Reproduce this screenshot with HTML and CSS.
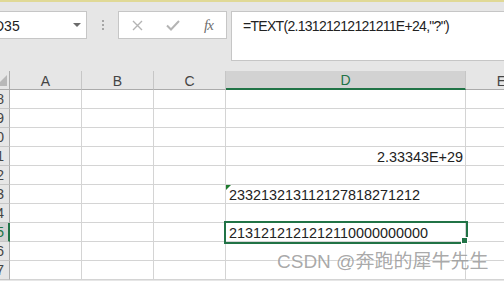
FILE: index.html
```html
<!DOCTYPE html>
<html lang="zh-CN">

<head>
  <meta charset="UTF-8">
  <meta name="viewport" content="width=device-width, initial-scale=1.0">
  <title>TEXT - Excel</title>
  <link rel="stylesheet" href="styles.css">
</head>

<body>

  <div class="topline"></div>

  <!-- Formula bar -->
  <div class="formula-row">
    <div class="namebox">
      <span class="name">D35</span>
      <span class="arrow"></span>
    </div>
    <div class="grip"><i></i><i></i><i></i></div>
    <div class="fbtns">
      <svg class="ico" width="11" height="11" viewBox="0 0 11 11">
        <path d="M1 1 L10 10 M10 1 L1 10" stroke="#b4b4b4" stroke-width="1.4" fill="none" />
      </svg>
      <svg class="ico" width="14" height="11" viewBox="0 0 14 11">
        <path d="M1 5.5 L5 9.5 L13 1" stroke="#b4b4b4" stroke-width="2" fill="none" />
      </svg>
      <span class="fx">fx</span>
    </div>
    <div class="fbar">=TEXT(2.13121212121211E+24,"?")</div>
  </div>

  <!-- Sheet -->
  <div class="sheet">
    <div class="c h corner"><span class="tri"></span></div>
    <div class="c h">A</div>
    <div class="c h">B</div>
    <div class="c h">C</div>
    <div class="c h h-sel">D</div>
    <div class="c h">E</div>

    <div class="c rh">28</div><div class="c"></div><div class="c"></div><div class="c"></div><div class="c d"></div><div class="c"></div>
    <div class="c rh">29</div><div class="c"></div><div class="c"></div><div class="c"></div><div class="c d"></div><div class="c"></div>
    <div class="c rh">30</div><div class="c"></div><div class="c"></div><div class="c"></div><div class="c d"></div><div class="c"></div>
    <div class="c rh">31</div><div class="c"></div><div class="c"></div><div class="c"></div><div class="c d num">2.33343E+29</div><div class="c"></div>
    <div class="c rh">32</div><div class="c"></div><div class="c"></div><div class="c"></div><div class="c d"></div><div class="c"></div>
    <div class="c rh">33</div><div class="c"></div><div class="c"></div><div class="c"></div><div class="c d txt warn">233213213112127818271212</div><div class="c"></div>
    <div class="c rh">34</div><div class="c"></div><div class="c"></div><div class="c"></div><div class="c d"></div><div class="c"></div>
    <div class="c rh rh-sel">35</div><div class="c"></div><div class="c"></div><div class="c"></div><div class="c d txt active">2131212121212110000000000</div><div class="c"></div>
    <div class="c rh">36</div><div class="c"></div><div class="c"></div><div class="c"></div><div class="c d"></div><div class="c"></div>
    <div class="c rh">37</div><div class="c"></div><div class="c"></div><div class="c"></div><div class="c d"></div><div class="c"></div>
  </div>

  <div class="watermark">CSDN @奔跑的犀牛先生</div>

</body>

</html>
```

FILE: styles.css
```css
body {
  font-family: "Liberation Sans", Arial, sans-serif;
  background: #e6e6e6;
  color: #222;
  margin: 0;
  padding: 0;
  width: 504px;
  height: 281px;
  overflow: hidden;
  position: relative;
}

.topline {
  height: 2px;
  background: #e0d996;
}

/* Formula row */
.formula-row {
  display: flex;
  align-items: flex-start;
  margin-top: 9px;
}

.namebox {
  width: 87px;
  height: 28px;
  box-sizing: border-box;
  background: #fff;
  border: 1px solid #c6c6c6;
  border-left: none;
  display: flex;
  align-items: center;
  justify-content: space-between;
  padding-right: 5px;
  overflow: hidden;
}

.name {
  font-size: 14px;
  margin-left: -6px;
  margin-top: 1px;
}

.arrow {
  width: 0;
  height: 0;
  border-left: 4px solid transparent;
  border-right: 4px solid transparent;
  border-top: 4px solid #6b6b6b;
}

.grip {
  width: 31px;
  height: 28px;
  display: flex;
  flex-direction: column;
  align-items: center;
  justify-content: center;
  gap: 2px;
}

.grip i {
  width: 2px;
  height: 2px;
  background: #a6a6a6;
}

.fbtns {
  width: 109px;
  height: 28px;
  box-sizing: border-box;
  background: #fff;
  border: 1px solid #c6c6c6;
  display: flex;
  align-items: center;
  padding-left: 13px;
  gap: 23px;
}

.fx {
  font-family: "Liberation Serif", "Times New Roman", serif;
  font-style: italic;
  font-size: 15px;
  color: #6f6f6f;
  letter-spacing: -1px;
  margin-left: 1px;
}

.fbar {
  flex: 1;
  height: 50px;
  margin-left: 4px;
  box-sizing: border-box;
  background: #fff;
  border: 1px solid #c6c6c6;
  border-right: none;
  padding: 4px 0 0 11px;
  font-size: 14px;
  line-height: 20px;
  letter-spacing: -0.7px;
  white-space: nowrap;
}

/* Sheet grid */
.sheet {
  margin-top: 10px;
  width: 538px;
  display: grid;
  grid-template-columns: 10px 72px 72px 72px 240px 72px;
  grid-auto-rows: 19px;
  background: #fff;
}

.c {
  box-sizing: border-box;
  border-right: 1px solid #d4d4d4;
  border-bottom: 1px solid #d4d4d4;
  display: flex;
  align-items: flex-end;
  font-size: 14.4px;
  line-height: 16px;
  white-space: nowrap;
  position: relative;
}

.h {
  background: #e6e6e6;
  border-right-color: #c6c6c6;
  border-bottom-color: #ababab;
  justify-content: center;
  font-size: 14px;
  color: #444;
}

.h-sel {
  background: #d2d2d2;
  border-bottom: 2px solid #217346;
  color: #217346;
}

.corner {
  border-right-color: #ababab;
  overflow: hidden;
}

.tri {
  position: absolute;
  right: 2px;
  bottom: 3px;
  width: 0;
  height: 0;
  border-left: 11px solid transparent;
  border-bottom: 11px solid #b8b8b8;
}

.rh {
  background: #e6e6e6;
  border-right-color: #ababab;
  border-bottom-color: #c6c6c6;
  justify-content: flex-end;
  align-items: center;
  overflow: hidden;
  padding-right: 5px;
  font-size: 14px;
  color: #444;
}

.rh-sel {
  background: #d2d2d2;
  border-right: 2px solid #217346;
  padding-right: 4px;
  color: #217346;
}

.d.num {
  justify-content: flex-end;
  padding-right: 2px;
}

.d.txt {
  padding-left: 3px;
}

.warn::before {
  content: "";
  position: absolute;
  left: 0;
  top: 0;
  border-top: 5px solid #1e7b2e;
  border-right: 5px solid transparent;
}

.active {
  outline: 2px solid #217346;
  z-index: 1;
}

.active::after {
  content: "";
  position: absolute;
  right: -3px;
  bottom: -3px;
  width: 5px;
  height: 5px;
  background: #217346;
  border: 1px solid #fff;
}

.watermark {
  position: absolute;
  left: 277px;
  top: 246px;
  font-family: "Liberation Sans", "Noto Sans CJK SC", sans-serif;
  font-size: 19px;
  color: rgba(120, 120, 120, 0.65);
  text-shadow: 0 0 2px #fff;
  white-space: nowrap;
}
```
